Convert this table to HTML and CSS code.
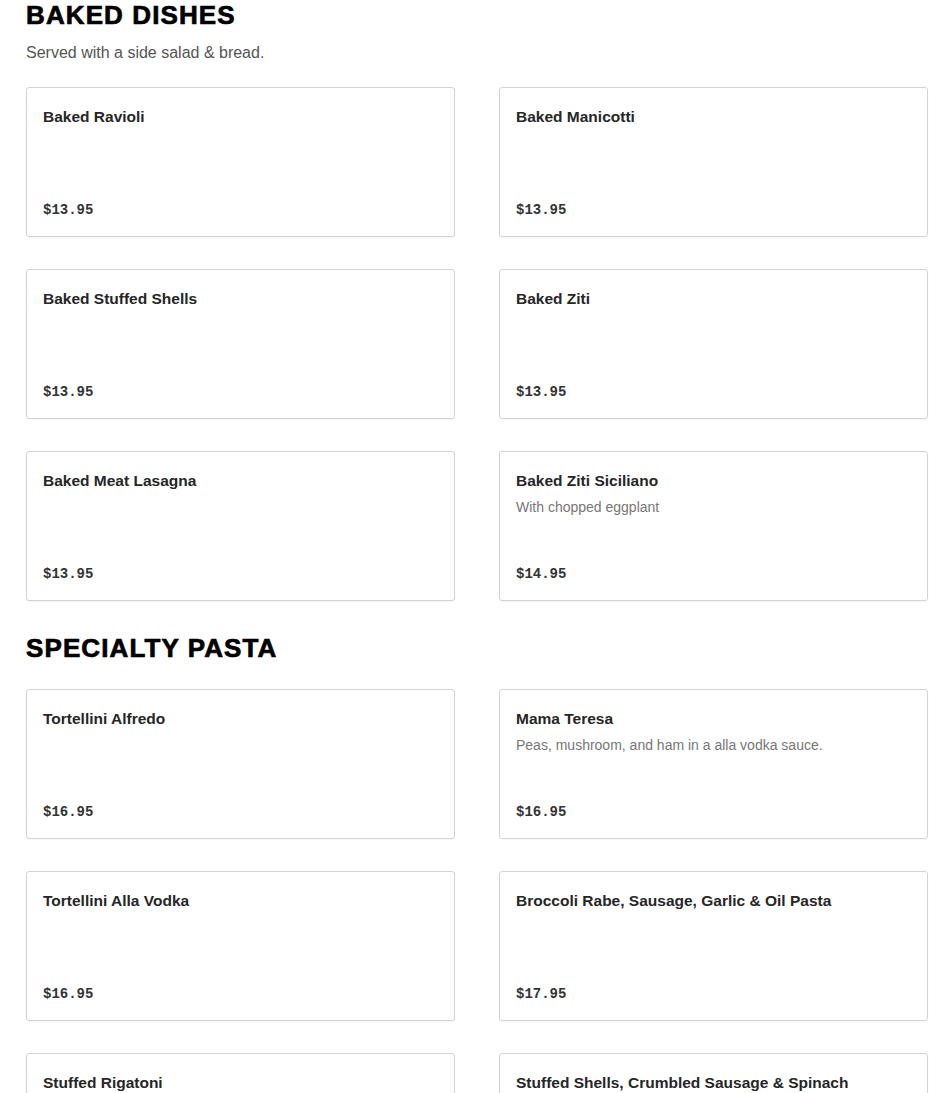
FILE: index.html
```html
<!DOCTYPE html>
<html>
<head>
<meta charset="utf-8">
<link rel="stylesheet" href="styles.css">
</head>
<body>
<main class="menu">
  <section class="section">
    <h2 class="section-title">BAKED DISHES</h2>
    <p class="section-sub">Served with a side salad &amp; bread.</p>
    <div class="grid">
      <div class="card"><div class="name">Baked Ravioli</div><div class="price">$13.95</div></div>
      <div class="card"><div class="name">Baked Manicotti</div><div class="price">$13.95</div></div>
      <div class="card"><div class="name">Baked Stuffed Shells</div><div class="price">$13.95</div></div>
      <div class="card"><div class="name">Baked Ziti</div><div class="price">$13.95</div></div>
      <div class="card"><div class="name">Baked Meat Lasagna</div><div class="price">$13.95</div></div>
      <div class="card"><div class="name">Baked Ziti Siciliano</div><div class="desc">With chopped eggplant</div><div class="price">$14.95</div></div>
    </div>
  </section>
  <section class="section">
    <h2 class="section-title">SPECIALTY PASTA</h2>
    <div class="grid">
      <div class="card"><div class="name">Tortellini Alfredo</div><div class="price">$16.95</div></div>
      <div class="card"><div class="name">Mama Teresa</div><div class="desc">Peas, mushroom, and ham in a alla vodka sauce.</div><div class="price">$16.95</div></div>
      <div class="card"><div class="name">Tortellini Alla Vodka</div><div class="price">$16.95</div></div>
      <div class="card"><div class="name">Broccoli Rabe, Sausage, Garlic &amp; Oil Pasta</div><div class="price">$17.95</div></div>
      <div class="card"><div class="name">Stuffed Rigatoni</div><div class="price">$16.95</div></div>
      <div class="card"><div class="name">Stuffed Shells, Crumbled Sausage &amp; Spinach</div><div class="price">$17.95</div></div>
    </div>
  </section>
</main>
</body>
</html>
```

FILE: styles.css
```css
html, body {
  margin: 0;
  padding: 0;
  background: #fff;
}
body {
  font-family: "Liberation Sans", Arial, sans-serif;
  color: #2b2b2b;
}
.menu {
  width: 902px;
  padding-left: 26px;
}
.section {
  margin-bottom: 32px;
}
.section-title {
  margin: 0;
  font-family: "Liberation Sans", Arial, sans-serif;
  font-weight: 900;
  font-size: 26px;
  line-height: 30px;
  color: #000;
  letter-spacing: 1.1px;
  -webkit-text-stroke: 0.7px #000;
}
.section-sub {
  margin: 11px 0 2px;
  font-size: 16px;
  line-height: 24px;
  color: #555;
}
.grid {
  margin-top: 22px;
  display: grid;
  grid-template-columns: 1fr 1fr;
  column-gap: 44px;
  row-gap: 32px;
}
.section-title + .grid {
  margin-top: 26px;
}
.card {
  box-sizing: border-box;
  height: 150px;
  border: 1px solid #d3d3d3;
  border-radius: 3px;
  padding: 17px 16px 16px;
  display: flex;
  flex-direction: column;
  box-shadow: 0 1px 2px rgba(0,0,0,0.04);
}
.name {
  font-size: 15.5px;
  font-weight: bold;
  line-height: 24px;
  color: #262626;
}
.desc {
  margin-top: 4px;
  font-size: 14px;
  line-height: 20px;
  color: #777;
}
.price {
  margin-top: auto;
  font-family: "Liberation Mono", "Courier New", monospace;
  font-weight: bold;
  font-size: 14px;
  line-height: 20px;
  color: #333;
}
```
